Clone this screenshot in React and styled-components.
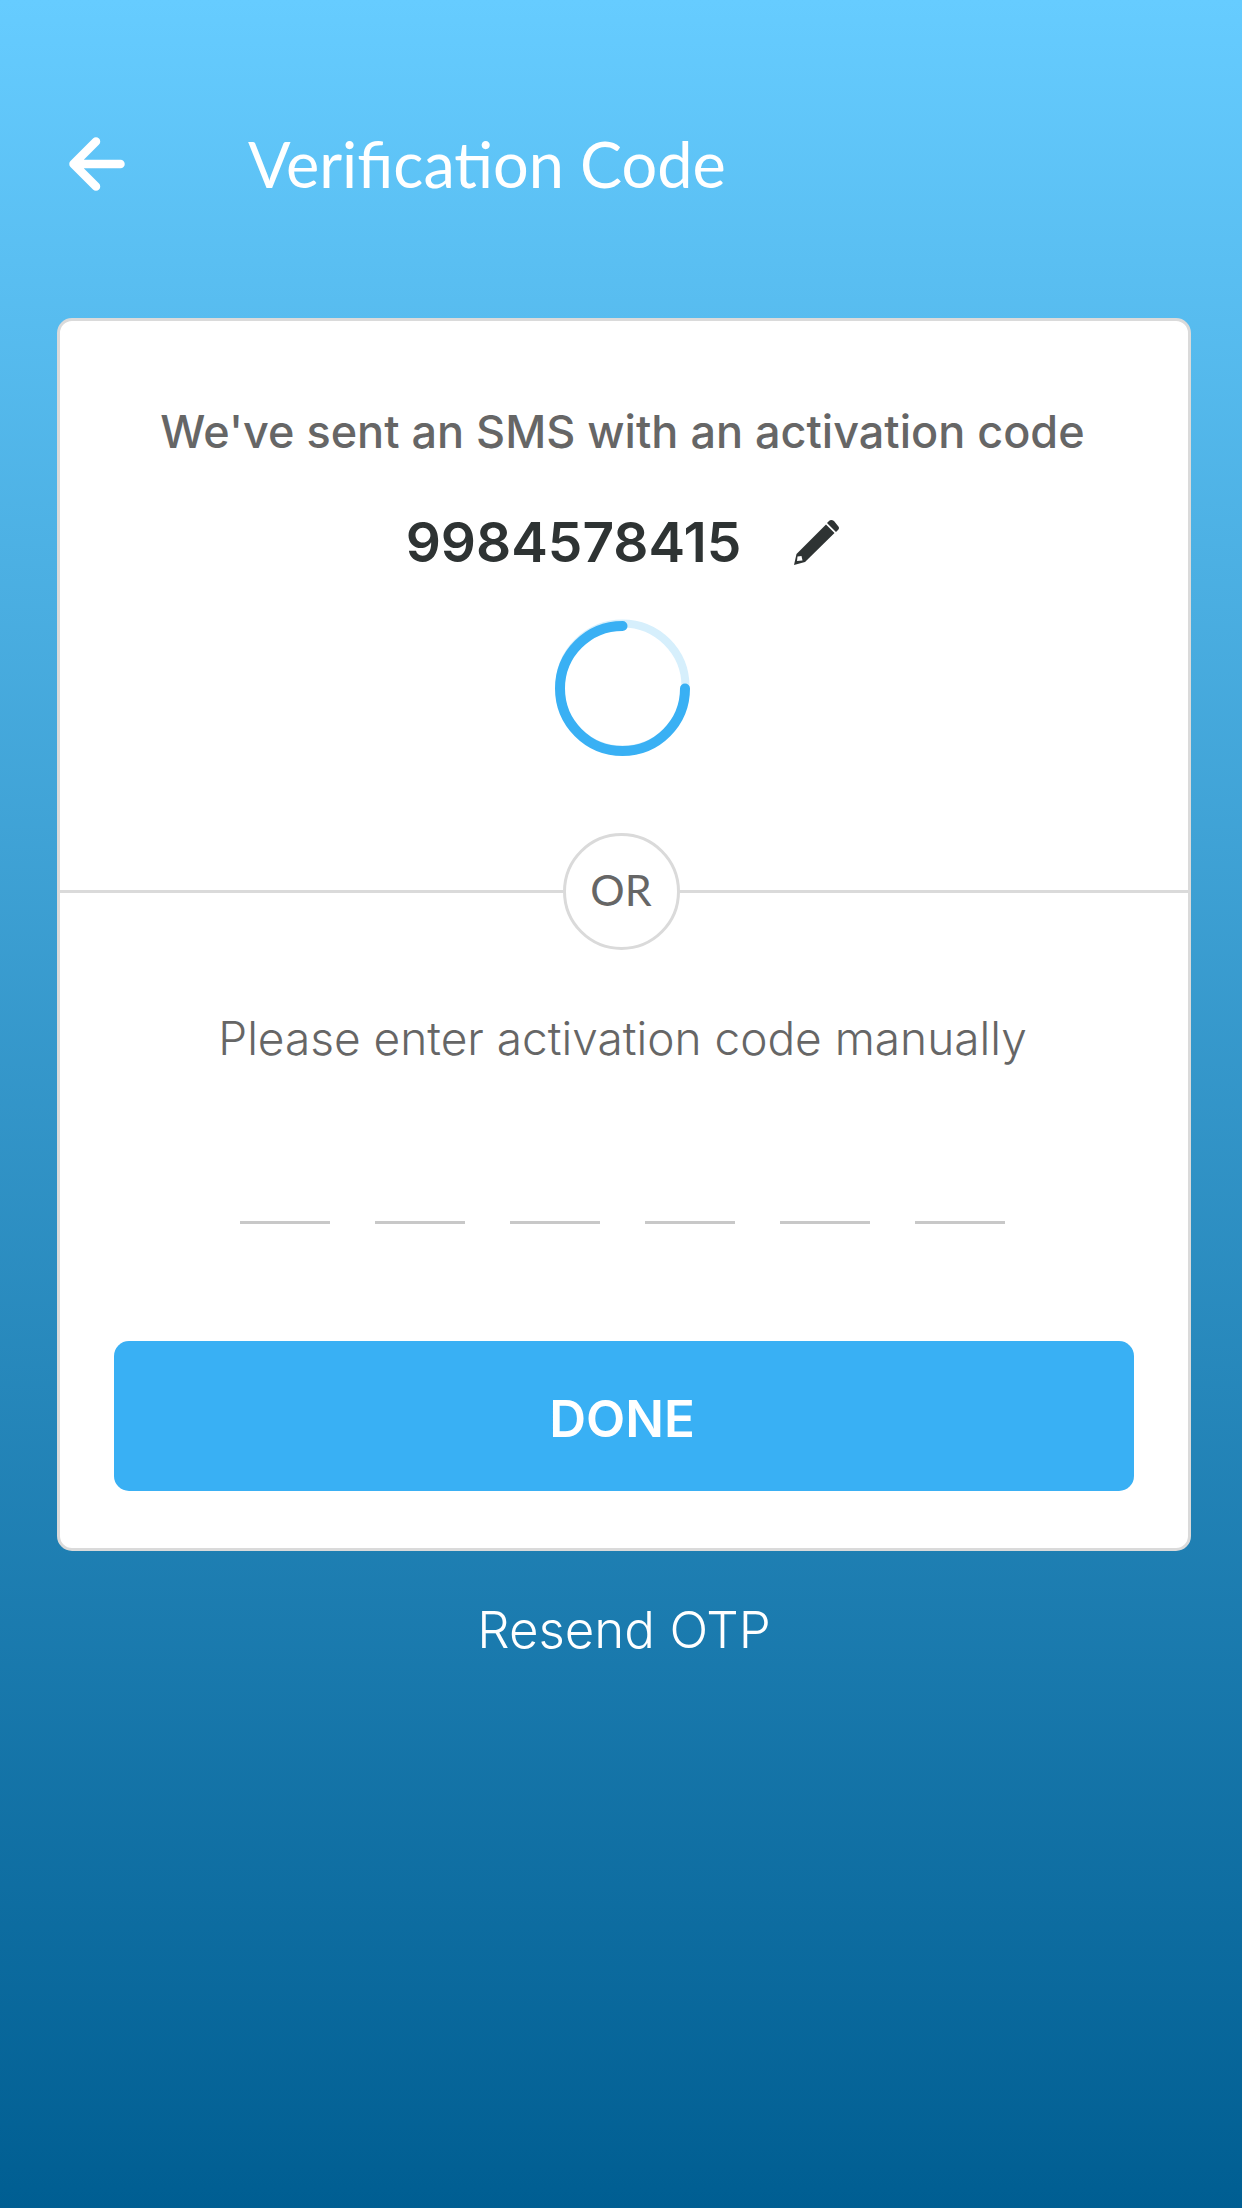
import React, { useState } from "react";
import styled, { createGlobalStyle } from "styled-components";

const GlobalStyle = createGlobalStyle`
  *, *::before, *::after { box-sizing: border-box; }
  body {
    margin: 0;
    font-family: Inter, "Open Sans", sans-serif;
    color: #666666;
  }
`;

const Page = styled.main`
  min-height: 100vh;
  padding: 120px 51px 60px 57px;
  background: linear-gradient(#66ccff, #005e92);
  display: flex;
  flex-direction: column;
`;

const Header = styled.header`
  display: flex;
  align-items: center;
  gap: 114px;
  height: 88px;
  padding-left: 3px;
  margin-bottom: 110px;
`;

const IconButton = styled.button`
  display: flex;
  align-items: center;
  justify-content: center;
  padding: 0;
  border: 0;
  background: none;
  color: ${(p) => p.$color};
  cursor: pointer;
`;

const Title = styled.h1`
  margin: 0;
  font: 400 63px/88px Lato, sans-serif;
  color: #ffffff;
`;

const Card = styled.form`
  display: flex;
  flex-direction: column;
  padding: 81px 0 57px;
  border: 3px solid #dadada;
  border-radius: 15px;
  background: #ffffff;
`;

const Message = styled.p`
  margin: 0;
  padding-right: 3px;
  font-size: ${(p) => p.$size};
  font-weight: ${(p) => p.$weight};
  line-height: 60px;
  text-align: center;
`;

const PhoneRow = styled.div`
  display: flex;
  align-items: center;
  justify-content: center;
  gap: 53px;
  height: 60px;
  margin: 50px 0 46px;
  padding-right: 3px;
  color: #2e3333;
`;

const Phone = styled.strong`
  font-size: 55px;
  font-weight: 600;
  line-height: 60px;
`;

const Spinner = styled.svg`
  display: block;
  width: 140px;
  height: 140px;
  margin: 0 auto 75px;
`;

const Divider = styled.div`
  display: flex;
  align-items: center;
  margin-bottom: 58px;

  &::before, &::after {
    content: "";
    flex: 1 1 0px;
    height: 3px;
    background: #dadada;
  }
  &::after { flex-basis: 6px; }
`;

const Or = styled.span`
  display: flex;
  align-items: center;
  justify-content: center;
  width: 117px;
  height: 117px;
  padding-bottom: 4px;
  border: 3px solid #dadada;
  border-radius: 50%;
  font: 400 43px/60px Lato, sans-serif;
`;

const CodeFields = styled.div`
  display: flex;
  justify-content: center;
  gap: 45px;
  padding-right: 3px;
  margin: 66px 0 117px;
`;

const Digit = styled.input`
  width: 90px;
  height: 90px;
  padding: 0;
  border: 0;
  border-bottom: 3px solid #c8c8c8;
  border-radius: 0;
  background: none;
  color: #2e3333;
  font: 600 55px/60px Inter, sans-serif;
  text-align: center;
  outline: none;

  &:focus { border-bottom-color: #39b0f4; }
`;

const DoneButton = styled.button`
  height: 150px;
  margin: 0 54px;
  padding: 6px 4px 0 0;
  border: 0;
  border-radius: 15px;
  background: #39b0f4;
  color: #ffffff;
  font: 600 51px/60px Inter, sans-serif;
  cursor: pointer;
`;

const Resend = styled.button`
  align-self: center;
  margin-top: 49px;
  padding: 0;
  border: 0;
  background: none;
  color: #ffffff;
  font: 300 51px/60px Inter, sans-serif;
  cursor: pointer;
`;

function BackArrow() {
  return (
    <svg width="74" height="60" viewBox="0 0 74 60" fill="none" stroke="currentColor" strokeWidth="8.500" strokeLinecap="round" strokeLinejoin="round" aria-hidden="true">
      <path d="M60.500 30H14M36 7.500L13.500 30L36 52.500" />
      <path d="M15 30L21 25V35Z" fill="currentColor" stroke="none" />
    </svg>
  );
}

function Pencil() {
  return (
    <svg width="45" height="45" viewBox="0 0 45 45" fill="currentColor" aria-hidden="true">
      <path d="M35 1Q37-1 40 1L44 6Q46 8 44 10L42 12L33 3Z" />
      <path fillRule="evenodd" d="M32 4.500L40.500 13L11 42L0 45L2.500 34ZM3.500 36.500L3 41L8.500 40.500L7.500 36Z" />
    </svg>
  );
}

export default function App() {
  const [code, setCode] = useState(["", "", "", "", "", ""]);
  const change = (index) => (event) => {
    const value = event.target.value.replace(/\D/g, "");
    setCode(code.map((digit, i) => (i === index ? value : digit)));
  };

  return (
    <>
      <GlobalStyle />
      <Page>
        <Header>
          <IconButton $color="#ffffff" type="button" aria-label="Back">
            <BackArrow />
          </IconButton>
          <Title>Verification Code</Title>
        </Header>
        <Card onSubmit={(event) => event.preventDefault()}>
          <Message $size="45px" $weight={500}>We've sent an SMS with an activation code</Message>
          <PhoneRow>
            <Phone>9984578415</Phone>
            <IconButton $color="#2e3333" type="button" aria-label="Edit number">
              <Pencil />
            </IconButton>
          </PhoneRow>
          <Spinner viewBox="0 0 140 140" fill="none" role="img" aria-label="Waiting for the code">
            <circle cx="68.500" cy="68.500" r="63" stroke="#d6effc" strokeWidth="8" />
            <path d="M68.500 8A62.500 62.500 0 1 0 131 70.500" stroke="#39b0f4" strokeWidth="10" strokeLinecap="round" />
          </Spinner>
          <Divider>
            <Or>OR</Or>
          </Divider>
          <Message $size="46px" $weight={300} id="code-label">Please enter activation code manually</Message>
          <CodeFields role="group" aria-labelledby="code-label">
            {code.map((digit, i) => (
              <Digit key={i} value={digit} onChange={change(i)} maxLength={1} inputMode="numeric" aria-label={`Digit ${i + 1}`} />
            ))}
          </CodeFields>
          <DoneButton type="submit">DONE</DoneButton>
        </Card>
        <Resend type="button">Resend OTP</Resend>
      </Page>
    </>
  );
}
